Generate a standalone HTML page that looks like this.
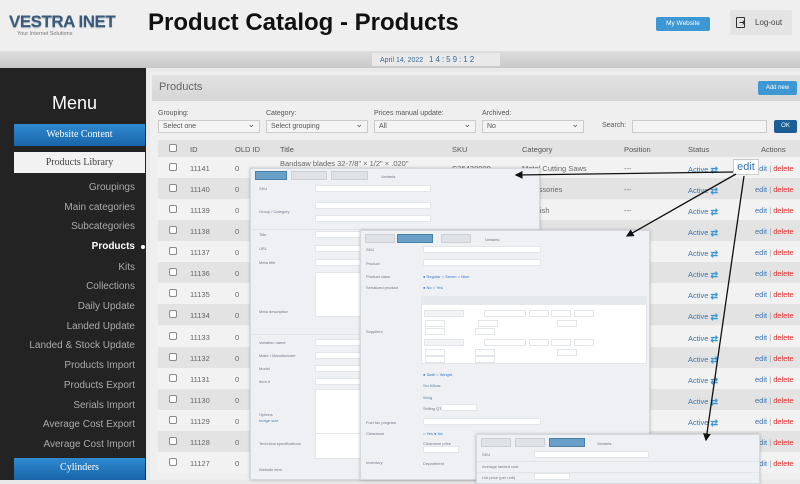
<!DOCTYPE html>
<html><head><meta charset="utf-8"><style>
*{box-sizing:border-box;margin:0;padding:0}
body{width:800px;height:480px;overflow:hidden;background:#e9e9e9;font-family:"Liberation Sans",sans-serif;position:relative}
.a{position:absolute}
.hdr{left:0;top:0;width:800px;height:52px;background:#efefef;border-bottom:1px solid #ddd}
.side{left:0;top:68px;width:146px;height:412px;background:#232323}
.mi{position:absolute;left:0;width:135px;font-size:10px;color:#aaa;text-align:right;white-space:nowrap}
.sel{position:absolute;height:13px;background:#f4f4f4;border:1px solid #ccc;font-size:7px;color:#555;padding:2px 4px}
.sel:after{content:"⌄";position:absolute;right:4px;top:-2px;font-size:9px;color:#555}
.lbl{position:absolute;font-size:7px;color:#555}
.row{position:absolute;left:158px;width:642px;height:21px;font-size:7.5px;color:#666}
.row span{position:absolute;top:7px}
.cb{width:8px;height:8px;border:1px solid #888;border-radius:2px;top:6px!important;left:11px;background:#fff}
.win{position:absolute;background:#eef0f3;border:1px solid #d5d8dc;box-shadow:0 0 3px rgba(0,0,0,.25);overflow:hidden}
.tab{position:absolute;height:9px;background:#dfe2e6;border:1px solid #ccd0d4}
.tab.on{background:#6a9fc8;border-color:#4a7fa8}
.fl{position:absolute;font-size:4px;color:#778}
.in{position:absolute;height:7px;background:#fff;border:1px solid #e2e5ea}
.ln{position:absolute;height:1px;background:#e2e5e8}
</style></head><body>
<div class="a hdr"></div>
<div class="a" style="left:9px;top:12px;font:bold 17px 'Liberation Sans',sans-serif;color:#3a5a78;letter-spacing:-0.5px;text-shadow:0 1px 1px #9ab">VESTRA INET</div>
<div class="a" style="left:17px;top:31px;font-size:5.5px;color:#777">Your Internet Solutions</div>
<div class="a" style="left:148px;top:9px;font:bold 24px 'Liberation Sans',sans-serif;color:#111">Product Catalog - Products</div>
<div class="a" style="left:656px;top:17px;width:54px;height:14px;background:#3d97d3;border-radius:2px;font-size:6.5px;color:#fff;text-align:center;line-height:14px">My Website</div>
<div class="a" style="left:730px;top:10px;width:62px;height:25px;background:#e4e4e4;border-radius:2px"></div>
<div class="a" style="left:736px;top:17px;width:9px;height:11px;border:1.5px solid #333;border-radius:1px"></div>
<div class="a" style="left:739px;top:18px;font-size:8px;color:#333">➜</div>
<div class="a" style="left:755px;top:18px;font-size:8px;color:#444">Log-out</div>
<div class="a" style="left:0;top:52px;width:800px;height:16px;background:linear-gradient(#dcdcdc,#c8c8c8)"></div>
<div class="a" style="left:372px;top:53px;width:128px;height:13px;background:#e9e9e9;font-size:7px;color:#3a6b9a;line-height:13px;padding-left:8px">April 14, 2022 &nbsp;&nbsp;<span style="letter-spacing:2px;font-size:8px">14:59:12</span></div>
<div class="a side"></div>
<div class="a" style="left:52px;top:93px;font-size:18px;color:#fff">Menu</div>
<div class="a" style="left:14px;top:124px;width:131px;height:22px;background:linear-gradient(#2f8ad0,#1865a8);font:10px 'Liberation Serif',serif;color:#fff;text-align:center;line-height:22px">Website Content</div>
<div class="a" style="left:14px;top:152px;width:131px;height:21px;background:#f2f2f2;font:10px 'Liberation Serif',serif;color:#444;text-align:center;line-height:21px">Products Library</div>
<div class="mi" style="top:182px">Groupings</div>
<div class="mi" style="top:202px">Main categories</div>
<div class="mi" style="top:221px">Subcategories</div>
<div class="mi" style="top:241px;color:#fff;font-weight:bold">Products</div>
<div class="a" style="left:141px;top:245px;width:4px;height:4px;border-radius:50%;background:#fff"></div>
<div class="mi" style="top:262px">Kits</div>
<div class="mi" style="top:281px">Collections</div>
<div class="mi" style="top:301px">Daily Update</div>
<div class="mi" style="top:321px">Landed Update</div>
<div class="mi" style="top:340px">Landed &amp; Stock Update</div>
<div class="mi" style="top:360px">Products Import</div>
<div class="mi" style="top:380px">Products Export</div>
<div class="mi" style="top:400px">Serials Import</div>
<div class="mi" style="top:419px">Average Cost Export</div>
<div class="mi" style="top:439px">Average Cost Import</div>
<div class="a" style="left:14px;top:458px;width:131px;height:22px;background:linear-gradient(#2f8ad0,#1865a8);font:10px 'Liberation Serif',serif;color:#fff;text-align:center;line-height:20px">Cylinders</div>
<div class="a" style="left:150px;top:72px;width:650px;height:408px;background:#efefef"></div>
<div class="a" style="left:152px;top:75px;width:648px;height:26px;background:linear-gradient(#e2e2e2,#d6d6d6)"></div>
<div class="a" style="left:159px;top:81px;font-size:11px;color:#666">Products</div>
<div class="a" style="left:758px;top:81px;width:39px;height:14px;background:#3d97d3;border-radius:2px;font-size:6px;color:#fff;text-align:center;line-height:14px">Add new</div>
<div class="lbl" style="left:158px;top:110px">Grouping:</div>
<div class="lbl" style="left:266px;top:110px">Category:</div>
<div class="lbl" style="left:374px;top:110px">Prices manual update:</div>
<div class="lbl" style="left:482px;top:110px">Archived:</div>
<div class="sel" style="left:158px;top:120px;width:102px">Select one</div>
<div class="sel" style="left:266px;top:120px;width:102px">Select grouping</div>
<div class="sel" style="left:374px;top:120px;width:102px">All</div>
<div class="sel" style="left:482px;top:120px;width:102px">No</div>
<div class="lbl" style="left:602px;top:122px">Search:</div>
<div class="a" style="left:632px;top:120px;width:135px;height:13px;background:#f4f4f4;border:1px solid #ccc"></div>
<div class="a" style="left:774px;top:120px;width:23px;height:13px;background:#1c5e96;border-radius:2px;font-size:6px;color:#fff;text-align:center;line-height:13px">OK</div>
<div class="row" style="top:140px;height:17px;background:#e2e2e2;color:#555"><span class="cb" style="top:4px!important"></span><span style="left:32px;top:5px">ID</span><span style="left:77px;top:5px">OLD ID</span><span style="left:122px;top:5px">Title</span><span style="left:294px;top:5px">SKU</span><span style="left:364px;top:5px">Category</span><span style="left:466px;top:5px">Position</span><span style="left:530px;top:5px">Status</span><span style="left:603px;top:5px">Actions</span></div>
<div id="rows"></div>
<script>
var ids=[11141,11140,11139,11138,11137,11136,11135,11134,11133,11132,11131,11130,11129,11128,11127],h='';
var cats=['Metal Cutting Saws','Accessories','& Polish','','','','','','','','','','','',''];
ids.forEach(function(id,i){var t=157+i*21.07;
h+='<div class="row" style="top:'+t+'px;background:'+(i%2?'#e3e3e3':'#f2f2f2')+'"><span class="cb"></span><span style="left:32px">'+id+'</span><span style="left:77px">0</span>'+(i==0?'<span style="left:122px;top:2px">Bandsaw blades 32-7/8" × 1/2" × .020"</span><span style="left:294px">C25430000</span>':'')+'<span style="left:364px">'+cats[i]+'</span>'+(i<3?'<span style="left:466px">---</span>':'')+'<span style="left:530px;color:#3a75b0">Active <b style="color:#3d97d3;font-size:9px;position:relative;top:1px">⇄</b></span><span style="left:597px;color:#3a75b0">edit <span style="position:static;color:#999">|</span> <span style="position:static;color:#d33">delete</span></span></div>';});
document.getElementById('rows').innerHTML=h;
</script>
<!-- window 1 -->
<div class="win" style="left:250px;top:168px;width:290px;height:312px">
<div class="tab on" style="left:4px;top:2px;width:32px"></div><div class="tab" style="left:40px;top:2px;width:36px"></div><div class="tab" style="left:80px;top:2px;width:37px"></div>
<div class="fl" style="left:130px;top:5px">Variants</div>
<div class="fl" style="left:8px;top:17px">SKU</div><div class="in" style="left:64px;top:16px;width:116px"></div>
<div class="fl" style="left:8px;top:40px">Group / Category</div><div class="in" style="left:64px;top:33px;width:116px"></div><div class="in" style="left:64px;top:46px;width:116px"></div>
<div class="ln" style="left:0;top:60px;width:290px"></div>
<div class="fl" style="left:8px;top:63px">Title</div><div class="in" style="left:64px;top:62px;width:60px"></div>
<div class="fl" style="left:8px;top:77px">URL</div><div class="in" style="left:64px;top:76px;width:60px"></div>
<div class="fl" style="left:8px;top:91px">Meta title</div><div class="in" style="left:64px;top:90px;width:60px"></div>
<div class="fl" style="left:8px;top:140px">Meta description</div><div class="in" style="left:64px;top:103px;width:60px;height:45px"></div>
<div class="ln" style="left:0;top:165px;width:290px"></div>
<div class="fl" style="left:8px;top:171px">Variation name</div><div class="in" style="left:64px;top:170px;width:60px"></div>
<div class="fl" style="left:8px;top:184px">Make / Manufacturer</div><div class="in" style="left:64px;top:183px;width:60px"></div>
<div class="fl" style="left:8px;top:197px">Model</div><div class="in" style="left:64px;top:196px;width:60px"></div>
<div class="fl" style="left:8px;top:210px">Item #</div><div class="in" style="left:64px;top:209px;width:60px"></div>
<div class="in" style="left:64px;top:220px;width:60px;height:48px"></div>
<div class="fl" style="left:8px;top:243px">Options</div><div class="fl" style="left:8px;top:249px;color:#58a">Image size</div>
<div class="fl" style="left:8px;top:272px">Technical specifications</div><div class="in" style="left:64px;top:264px;width:60px;height:26px"></div>
<div class="fl" style="left:8px;top:298px">Website item</div>
</div>
<!-- window 2 -->
<div class="win" style="left:360px;top:230px;width:290px;height:250px">
<div class="tab" style="left:4px;top:3px;width:30px"></div><div class="tab on" style="left:36px;top:3px;width:36px"></div><div class="tab" style="left:80px;top:3px;width:30px"></div>
<div class="fl" style="left:124px;top:6px">Variants</div>
<div class="fl" style="left:5px;top:16px">SKU</div><div class="in" style="left:62px;top:15px;width:118px"></div>
<div class="fl" style="left:5px;top:30px">Product</div><div class="in" style="left:62px;top:28px;width:118px"></div>
<div class="fl" style="left:5px;top:43px">Product class</div><div class="fl" style="left:62px;top:43px;color:#37c">● Regular ○ Seven ○ Nine</div>
<div class="fl" style="left:5px;top:54px">Serialized product</div><div class="fl" style="left:62px;top:54px;color:#37c">● No ○ Yes</div>
<div class="a" style="left:60px;top:65px;width:226px;height:68px;background:#fff;border:1px solid #e2e5ea"></div>
<div class="a" style="left:60px;top:65px;width:226px;height:9px;background:#e6e9ec"></div>
<div class="fl" style="left:5px;top:98px">Suppliers</div>
<div class="in" style="left:63px;top:79px;width:40px;background:#f1f3f5"></div><div class="in" style="left:123px;top:79px;width:42px"></div><div class="in" style="left:168px;top:79px;width:20px"></div><div class="in" style="left:190px;top:79px;width:20px"></div><div class="in" style="left:213px;top:79px;width:20px"></div>
<div class="in" style="left:64px;top:89px;width:20px"></div><div class="in" style="left:117px;top:89px;width:20px"></div><div class="in" style="left:196px;top:89px;width:20px"></div>
<div class="in" style="left:64px;top:97px;width:20px"></div><div class="in" style="left:114px;top:97px;width:20px"></div>
<div class="in" style="left:63px;top:108px;width:40px;background:#f1f3f5"></div><div class="in" style="left:123px;top:108px;width:42px"></div><div class="in" style="left:168px;top:108px;width:20px"></div><div class="in" style="left:190px;top:108px;width:20px"></div><div class="in" style="left:213px;top:108px;width:20px"></div>
<div class="in" style="left:64px;top:118px;width:20px"></div><div class="in" style="left:114px;top:118px;width:20px"></div><div class="in" style="left:196px;top:118px;width:20px"></div>
<div class="in" style="left:64px;top:125px;width:20px"></div><div class="in" style="left:114px;top:125px;width:20px"></div>
<div class="fl" style="left:62px;top:141px;color:#37c">● Skell ○ Weight</div>
<div class="fl" style="left:62px;top:152px;color:#58a">Scr.Kilkas</div><div class="fl" style="left:62px;top:164px;color:#58a">Weig</div>
<div class="fl" style="left:62px;top:175px">Selling QTY</div><div class="in" style="left:80px;top:173px;width:36px"></div>
<div class="fl" style="left:5px;top:189px">Fuel tax program</div><div class="in" style="left:62px;top:187px;width:118px"></div>
<div class="fl" style="left:5px;top:200px">Clearance</div><div class="fl" style="left:62px;top:200px;color:#37c">○ Yes ● No</div>
<div class="fl" style="left:62px;top:210px">Clearance price</div><div class="in" style="left:62px;top:215px;width:36px"></div>
<div class="fl" style="left:5px;top:229px">Inventory</div><div class="fl" style="left:62px;top:230px">Department</div>
</div>
<!-- window 3 -->
<div class="win" style="left:476px;top:434px;width:284px;height:50px">
<div class="tab" style="left:4px;top:3px;width:30px"></div><div class="tab" style="left:38px;top:3px;width:30px"></div><div class="tab on" style="left:72px;top:3px;width:36px"></div>
<div class="fl" style="left:120px;top:6px">Variants</div>
<div class="fl" style="left:5px;top:17px">SKU</div><div class="in" style="left:57px;top:16px;width:115px"></div>
<div class="ln" style="left:0;top:26px;width:284px"></div>
<div class="fl" style="left:5px;top:29px">Average landed cost</div>
<div class="ln" style="left:0;top:37px;width:284px"></div>
<div class="fl" style="left:5px;top:40px">List price (per unit)</div><div class="in" style="left:57px;top:38px;width:36px"></div>
</div>
<div class="a" style="left:733px;top:159px;width:26px;height:16px;background:#fff;border:1px solid #ccc;font-size:11px;color:#3a75b0;text-align:center;line-height:14px">edit</div>
<svg class="a" style="left:0;top:0" width="800" height="480"><defs><marker id="m" markerWidth="6" markerHeight="6" refX="5" refY="3" orient="auto"><path d="M0,0L6,3L0,6z" fill="#111"/></marker></defs>
<g stroke="#111" stroke-width="1.3" fill="none" marker-end="url(#m)">
<line x1="733" y1="172" x2="516" y2="175"/>
<line x1="736" y1="174" x2="627" y2="236"/>
<line x1="744" y1="176" x2="706" y2="440"/>
</g></svg>
</body></html>
